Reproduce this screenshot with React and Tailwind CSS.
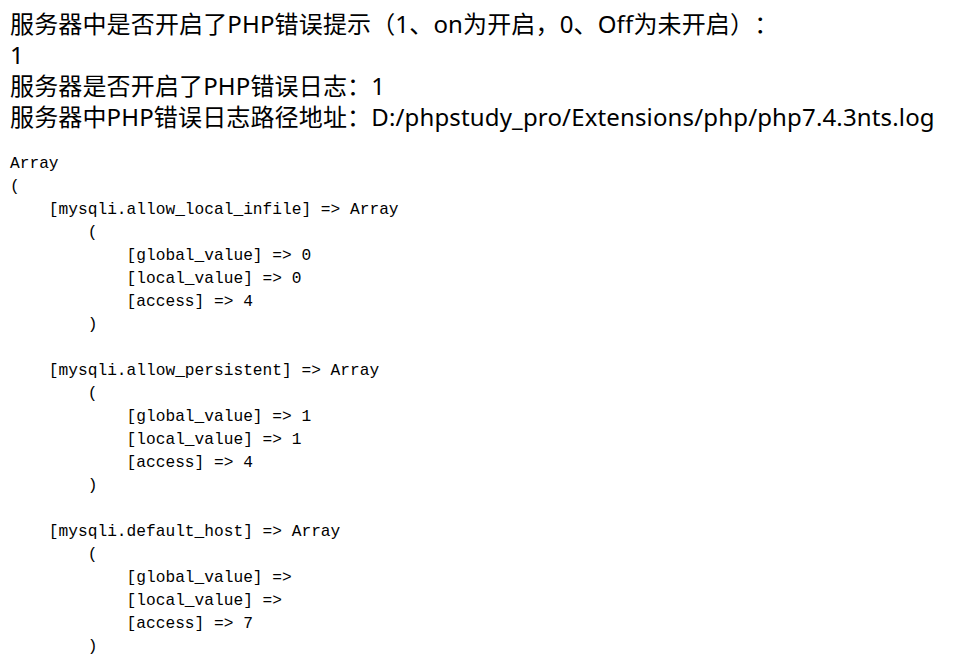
const lines = [
  "Array",
  "(",
  "    [mysqli.allow_local_infile] => Array",
  "        (",
  "            [global_value] => 0",
  "            [local_value] => 0",
  "            [access] => 4",
  "        )",
  "",
  "    [mysqli.allow_persistent] => Array",
  "        (",
  "            [global_value] => 1",
  "            [local_value] => 1",
  "            [access] => 4",
  "        )",
  "",
  "    [mysqli.default_host] => Array",
  "        (",
  "            [global_value] => ",
  "            [local_value] => ",
  "            [access] => 7",
  "        )",
];

export default function App() {
  return (
    <div className="min-h-screen bg-white text-black px-[10px] pt-[8px]">
      <div className="text-[24px] leading-[31px] tracking-[0.15px] [text-spacing-trim:space-all] font-['Noto_Sans','Noto_Sans_CJK_SC',sans-serif] whitespace-nowrap">
        <div>服务器中是否开启了PHP错误提示（1、on为开启，0、Off为未开启）：</div>
        <div>1</div>
        <div>服务器是否开启了PHP错误日志：1</div>
        <div>服务器中PHP错误日志路径地址：D:/phpstudy_pro/Extensions/php/php7.4.3nts.log</div>
      </div>
      <pre className="mt-[21px] text-[16.2px] leading-[23px] font-['Liberation_Mono',monospace] whitespace-pre">
        {lines.join("\n")}
      </pre>
    </div>
  );
}
